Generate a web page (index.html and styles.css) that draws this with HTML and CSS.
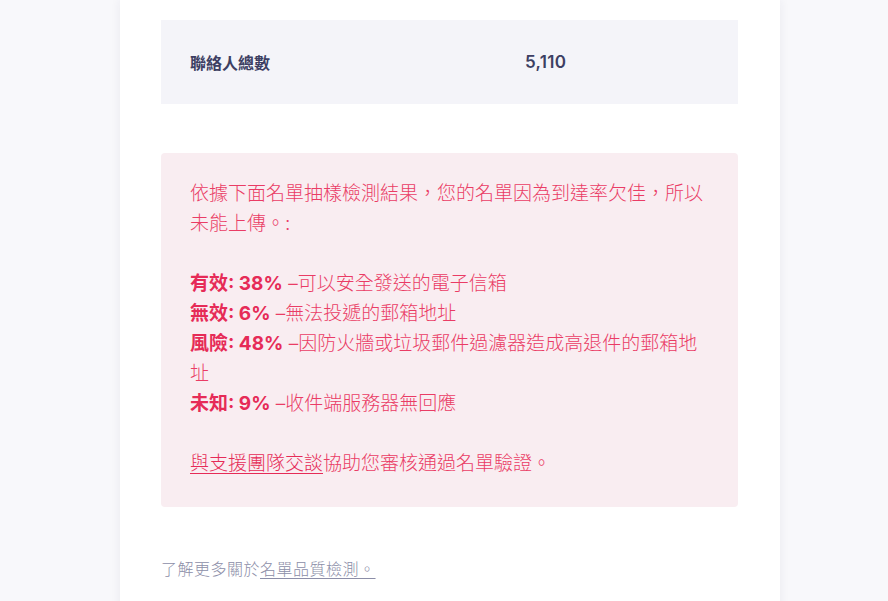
FILE: index.html
```html
<!DOCTYPE html>
<html lang="zh-Hant">
<head>
<meta charset="utf-8">
<title>名單檢測</title>
<link rel="stylesheet" href="styles.css">
</head>
<body>
<div class="page">
  <main class="card">
    <div class="stats">
      <div class="stat-label">聯絡人總數</div>
      <div class="stat-value">5,110</div>
    </div>

    <section class="alert">
      <p>依據下面名單抽樣檢測結果，您的名單因為到達率欠佳，所以未能上傳。:</p>
      <p>
        <strong>有效: 38%</strong> –可以安全發送的電子信箱<br>
        <strong>無效: 6%</strong> –無法投遞的郵箱地址<br>
        <strong>風險: 48%</strong> –因防火牆或垃圾郵件過濾器造成高退件的郵箱地址<br>
        <strong>未知: 9%</strong> –收件端服務器無回應
      </p>
      <p><a class="alert-link" href="#">與支援團隊交談</a>協助您審核通過名單驗證。</p>
    </section>

    <p class="more">了解更多關於<a class="more-link" href="#">名單品質檢測。</a></p>
  </main>
</div>
</body>
</html>
```

FILE: styles.css
```css
html, body {
  margin: 0;
  padding: 0;
}

body {
  background: #f8f8fb;
  font-family: Inter, "Noto Sans CJK TC", sans-serif;
  height: 601px;
  overflow: hidden;
}

.page {
  display: flex;
  padding-left: 120px;
}

.card {
  width: 660px;
  min-height: 640px;
  background: #ffffff;
  box-shadow: 0 0 10px rgba(40, 40, 80, 0.07);
  padding: 20px 42px 0 41px;
  box-sizing: border-box;
}

.stats {
  display: grid;
  grid-template-columns: 335px 1fr;
  align-items: center;
  height: 84px;
  padding: 0 29px;
  background: #f4f4f9;
  color: #3d3f63;
  font-size: 16px;
  font-weight: 600;
}

.stat-value {
  font-size: 17px;
  letter-spacing: 0.3px;
}

.alert {
  margin-top: 49px;
  background: #f9edf1;
  border-radius: 4px;
  padding: 26px 29px 28px 29px;
  color: #ea3c65;
  font-size: 19px;
  font-weight: 300;
  line-height: 30px;
}

.alert p {
  margin: 30px 0 0 0;
}

.alert p:first-child {
  margin-top: 0;
}

.alert strong {
  font-weight: 700;
  color: #e62b57;
}

.alert-link {
  color: #e62b57;
  text-decoration: underline;
  text-underline-offset: 3px;
  text-decoration-thickness: 1px;
}

.more {
  margin: 50px 0 0 0;
  font-size: 16px;
  font-weight: 300;
  line-height: 24px;
  letter-spacing: 0.5px;
  color: #8c8ea8;
}

.more-link {
  color: #8c8ea8;
  text-decoration: underline;
  text-underline-offset: 3px;
  text-decoration-thickness: 1px;
}
```
